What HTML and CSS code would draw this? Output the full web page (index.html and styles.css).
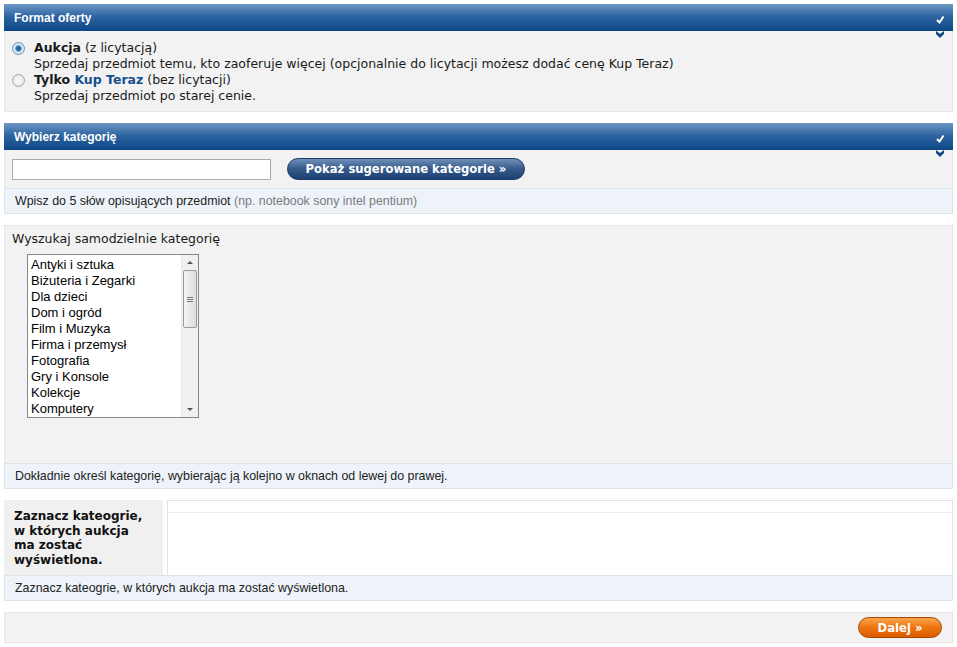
FILE: index.html
```html
<!DOCTYPE html>
<html lang="pl">
<head>
    <meta charset="UTF-8">
    <title>Wystaw przedmiot</title>
    <link rel="stylesheet" href="styles.css">
</head>
<body>
    <div class="page">
        <div class="section">
            <div class="bar">
                <span>Format oferty</span>
                <svg class="bar-icon" width="12" height="36" viewBox="0 0 12 36">
                    <path d="M3 16 L5.5 18.5 L9.5 12.5" stroke="#fff" stroke-width="2" fill="none"/>
                    <path d="M2 27 L6 30 L10 27 L10 30 L6 34 L2 30 Z" fill="#0c4683"/>
                </svg>
            </div>
            <div class="box formats">
                <label class="option">
                    <span class="radio checked"></span>
                    <span><b>Aukcja</b> (z licytacją)</span>
                </label>
                <div class="desc">Sprzedaj przedmiot temu, kto zaoferuje więcej (opcjonalnie do licytacji możesz dodać cenę Kup Teraz)</div>
                <label class="option">
                    <span class="radio"></span>
                    <span><b>Tylko <span class="kup">Kup Teraz</span></b> (bez licytacji)</span>
                </label>
                <div class="desc">Sprzedaj przedmiot po starej cenie.</div>
            </div>
        </div>

        <div class="section">
            <div class="bar">
                <span>Wybierz kategorię</span>
                <svg class="bar-icon" width="12" height="36" viewBox="0 0 12 36">
                    <path d="M3 16 L5.5 18.5 L9.5 12.5" stroke="#fff" stroke-width="2" fill="none"/>
                    <path d="M2 27 L6 30 L10 27 L10 30 L6 34 L2 30 Z" fill="#0c4683"/>
                </svg>
            </div>
            <div class="box search">
                <input type="text" class="search-input">
                <button class="btn-blue">Pokaż sugerowane kategorie &raquo;</button>
            </div>
            <div class="hint">Wpisz do 5 słów opisujących przedmiot <span class="muted">(np. notebook sony intel pentium)</span></div>
        </div>

        <div class="section">
            <div class="box browse">
                <div class="browse-title">Wyszukaj samodzielnie kategorię</div>
                <div class="listbox">
                    <ul class="items">
                        <li>Antyki i sztuka</li>
                        <li>Biżuteria i Zegarki</li>
                        <li>Dla dzieci</li>
                        <li>Dom i ogród</li>
                        <li>Film i Muzyka</li>
                        <li>Firma i przemysł</li>
                        <li>Fotografia</li>
                        <li>Gry i Konsole</li>
                        <li>Kolekcje</li>
                        <li>Komputery</li>
                    </ul>
                    <div class="scroll">
                        <span class="arrow up"></span>
                        <div class="thumb"><span></span><span></span><span></span></div>
                        <span class="arrow down"></span>
                    </div>
                </div>
            </div>
            <div class="hint">Dokładnie określ kategorię, wybierając ją kolejno w oknach od lewej do prawej.</div>
        </div>

        <div class="section">
            <div class="mark">
                <div class="mark-label">Zaznacz kateogrie, w których aukcja ma zostać wyświetlona.</div>
                <div class="mark-table">
                    <div class="mark-head"></div>
                    <div class="mark-body"></div>
                </div>
            </div>
            <div class="hint">Zaznacz kateogrie, w których aukcja ma zostać wyświetlona.</div>
        </div>

        <div class="actions">
            <button class="btn-orange">Dalej &raquo;</button>
        </div>
    </div>
</body>
</html>
```

FILE: styles.css
```css
body {
    margin: 0;
    background: #fff;
    font-family: "DejaVu Sans", Verdana, sans-serif;
    font-size: 12px;
    color: #1a1a1a;
}

.page {
    padding: 4px 4px 0 4px;
}

.section {
    margin-bottom: 11px;
}

.bar {
    position: relative;
    height: 27px;
    display: flex;
    align-items: center;
    padding-left: 10px;
    background: linear-gradient(#6d97c4, #2f66a2 45%, #0c4685);
    color: #fff;
    font-family: "Liberation Sans", Arial, sans-serif;
    font-weight: bold;
    font-size: 12px;
}

.bar-icon {
    position: absolute;
    right: 7px;
    top: 0;
}

.box {
    background: #f2f2f2;
    border: 1px solid #e6e6e6;
    border-top: none;
}

.formats {
    padding: 9px 7px 7px 7px;
    line-height: 16px;
    font-size: 12.5px;
}

.option {
    display: flex;
    align-items: center;
}

.desc {
    padding-left: 22px;
}

.radio {
    width: 13px;
    height: 13px;
    border-radius: 50%;
    border: 1px solid #a6a6a6;
    background: radial-gradient(#fdfdfd, #dedede);
    margin-right: 9px;
    box-sizing: border-box;
}

.radio.checked {
    border-color: #6a8fb0;
    background: radial-gradient(#1f5b8c 0, #3b7bb0 32%, #cfe0ee 46%, #f4f8fb 100%);
}

.kup {
    color: #164f8e;
}

.search {
    display: flex;
    align-items: center;
    padding: 8px 7px 8px 7px;
    border-bottom: none;
}

.search-input {
    width: 259px;
    height: 21px;
    box-sizing: border-box;
    border: 1px solid #a5acb5;
    margin: 0;
    background: #fff;
}

.btn-blue {
    margin-left: 16px;
    width: 238px;
    height: 22px;
    border-radius: 11px;
    border: 1px solid #1b3c66;
    background: linear-gradient(#7190b8, #34598a 50%, #1c4273);
    color: #fff;
    font-family: "DejaVu Sans", Verdana, sans-serif;
    font-weight: bold;
    font-size: 11.6px;
    padding: 0;
}

.hint {
    background: #eef3fa;
    border: 1px solid #dbe3ec;
    padding: 0 10px;
    height: 24px;
    line-height: 24px;
    font-family: "Liberation Sans", Arial, sans-serif;
    font-size: 12.4px;
    color: #222;
}

.muted {
    color: #7b7b7b;
}

.browse {
    border: 1px solid #e6e6e6;
    border-bottom: none;
    padding: 5px 7px 0 7px;
    height: 232px;
}

.browse-title {
    font-size: 12.5px;
    line-height: 16px;
    margin-bottom: 7px;
}

.listbox {
    margin-left: 15px;
    width: 172px;
    height: 164px;
    box-sizing: border-box;
    border: 1px solid #828790;
    background: #fff;
    display: flex;
}

.items {
    list-style: none;
    margin: 0;
    padding: 2px 0 0 3px;
    flex: 1;
    overflow: hidden;
    font-family: "Liberation Sans", Arial, sans-serif;
    font-size: 13px;
    line-height: 16px;
    color: #000;
}

.scroll {
    width: 16px;
    background: #f0f0f0;
    display: flex;
    flex-direction: column;
    align-items: center;
    border-left: 1px solid #e8e8e8;
}

.arrow {
    width: 0;
    height: 0;
    border-left: 3px solid transparent;
    border-right: 3px solid transparent;
    margin: 6px 0;
}

.arrow.up {
    border-bottom: 3px solid #555;
}

.arrow.down {
    border-top: 3px solid #555;
    margin-top: auto;
}

.thumb {
    width: 14px;
    height: 58px;
    box-sizing: border-box;
    border: 1px solid #9a9a9a;
    border-radius: 2px;
    background: linear-gradient(90deg, #f6f6f6, #dcdcdc);
    display: flex;
    flex-direction: column;
    justify-content: center;
    align-items: center;
    gap: 1px;
}

.thumb span {
    width: 6px;
    height: 1px;
    background: #777;
}

.mark {
    display: flex;
    height: 75px;
}

.mark-label {
    width: 159px;
    box-sizing: border-box;
    background: #f0f0f0;
    padding: 9px 10px 0 10px;
    font-weight: bold;
    font-size: 12px;
    line-height: 14.5px;
    color: #111;
}

.mark-table {
    flex: 1;
    margin-left: 4px;
    border: 1px solid #e3e3e3;
    border-bottom: none;
    display: flex;
    flex-direction: column;
}

.mark-head {
    height: 11px;
    border-bottom: 1px solid #ececec;
}

.mark-body {
    flex: 1;
}

.actions {
    background: #f2f2f2;
    border: 1px solid #e6e6e6;
    height: 31px;
    box-sizing: border-box;
    display: flex;
    align-items: center;
    justify-content: flex-end;
    padding-right: 10px;
}

.btn-orange {
    width: 84px;
    height: 21px;
    border-radius: 11px;
    border: 1px solid #a84800;
    background: linear-gradient(#f9a54c, #ee7411 50%, #dc5b00);
    color: #fff;
    font-family: "DejaVu Sans", Verdana, sans-serif;
    font-weight: bold;
    font-size: 11.6px;
    padding: 0;
}
```
